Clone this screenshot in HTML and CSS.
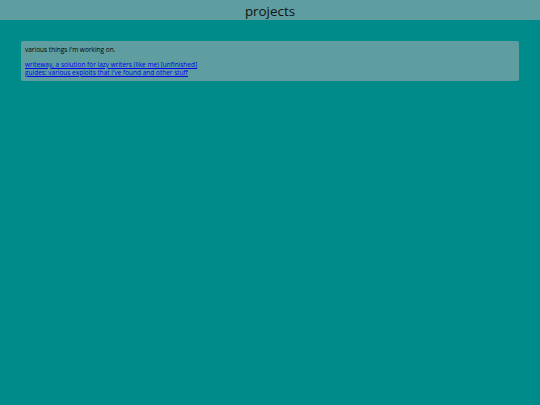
FILE: index.html
```html
<!DOCTYPE html>
<html>
<head>
<meta charset="utf-8">
<link rel="stylesheet" href="styles.css">
</head>
<body>
<header class="topbar"><h1 class="title">projects</h1></header>
<main class="panel">
<p class="intro">various things i'm working on.</p>
<p class="links">
<a href="#">writeway, a solution for lazy writers (like me) [unfinished]</a><br>
<a href="#">guides: various exploits that i've found and other stuff</a>
</p>
</main>
</body>
</html>
```
FILE: styles.css
```css
html, body {
  margin: 0;
  padding: 0;
  background: #008b8b;
  font-family: "Open Sans", "DejaVu Sans", sans-serif;
}
.topbar {
  background: #5f9ea0;
  height: 20px;
  text-align: center;
}
.title {
  margin: 0;
  font-size: 13.4px;
  font-weight: normal;
  line-height: 22px;
  color: #111;
}
.panel {
  margin: 21px 21px 0;
  background: #5f9ea0;
  border-radius: 2px;
  padding: 5px 4px 4px;
  font-size: 6.5px;
  line-height: 8px;
  color: #000;
}
.intro { margin: 0 0 7px; }
.links { margin: 0; }
.links a { color: #0000ee; }
```
